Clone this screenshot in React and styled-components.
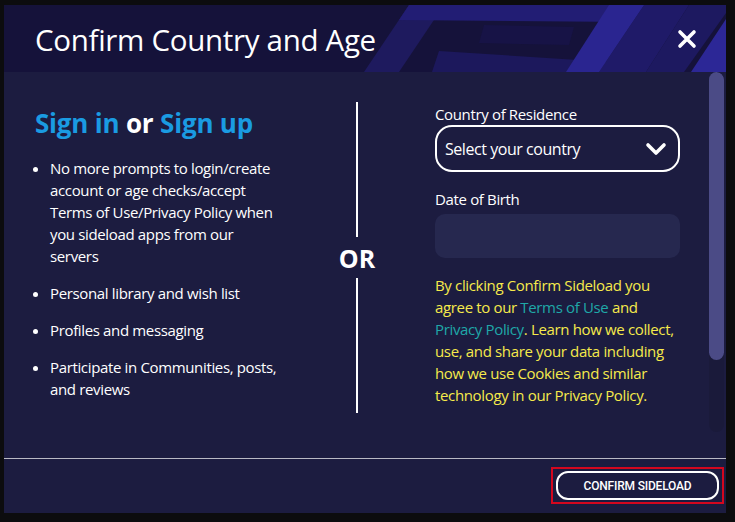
import React from 'react';
import styled, { createGlobalStyle } from 'styled-components';

const GlobalStyle = createGlobalStyle`
  html, body {
    margin: 0;
    padding: 0;
    background: #0c0c0e;
  }
  body {
    font-family: 'Open Sans', 'Noto Sans', sans-serif;
    color: #fff;
  }
`;

const bullets = [
    'No more prompts to login/create account or age checks/accept Terms of Use/Privacy Policy when you sideload apps from our servers',
    'Personal library and wish list',
    'Profiles and messaging',
    'Participate in Communities, posts, and reviews',
];

// purple maze artwork behind the header, right side
const HeaderArt = () => (
    <ArtSvg viewBox="0 0 382 67" preserveAspectRatio="none">
        <polygon points="20,67 55,67 100,0 65,0" fill="#1e1a5e" />
        <polygon points="65,0 300,0 288,17 55,15" fill="#221d74" />
        <polygon points="95,46 265,57 259,67 88,67" fill="#1c185c" />
        <polygon points="140,20 230,22 225,40 135,38" fill="#171346" />
        <polygon points="300,0 345,0 302,67 255,67" fill="#1f1a68" />
        <polygon points="265,0 300,0 255,67 222,67" fill="#2a2590" />
        <polygon points="345,0 382,0 382,8 340,67 302,67" fill="#1d1960" />
        <polygon points="347,67 382,67 382,14" fill="#2c2796" />
    </ArtSvg>
);

const Close = () => (
    <CloseButton aria-label="Close">
        <svg width="20" height="20" viewBox="0 0 20 20">
            <path d="M3 3 L17 17 M17 3 L3 17" stroke="#fff" strokeWidth="3.6" strokeLinecap="round" />
        </svg>
    </CloseButton>
);

const App = () => {
    return(<>
        <GlobalStyle />
        <Page>
            <Modal>
                <Header>
                    <HeaderArt />
                    <Title>Confirm Country and Age</Title>
                    <Close />
                </Header>
                <Body>
                    <Content>
                        <Left>
                            <SignHeading>
                                <Blue>Sign in</Blue> or <Blue>Sign up</Blue>
                            </SignHeading>
                            <List>
                                {bullets.map((b) => <Item key={b}>{b}</Item>)}
                            </List>
                        </Left>
                        <Divider>
                            <VLine />
                            <Or>OR</Or>
                            <VLine />
                        </Divider>
                        <Right>
                            <Label $mb={1}>Country of Residence</Label>
                            <Select>
                                <span>Select your country</span>
                                <svg width="22" height="14" viewBox="0 0 22 14">
                                    <path d="M3 3 L11 11 L19 3" stroke="#fff" strokeWidth="3.6" fill="none" strokeLinecap="round" strokeLinejoin="round" />
                                </svg>
                            </Select>
                            <Label $top={17} $mb={5}>Date of Birth</Label>
                            <DateBox />
                            <Legal>
                                By clicking Confirm Sideload you agree to our <Link>Terms of Use</Link> and <Link>Privacy Policy</Link>. Learn how we collect, use, and share your data including how we use Cookies and similar technology in our Privacy Policy.
                            </Legal>
                        </Right>
                    </Content>
                    <Scrollbar>
                        <Thumb />
                    </Scrollbar>
                </Body>
                <Footer>
                    <Highlight>
                        <ConfirmButton>Confirm Sideload</ConfirmButton>
                    </Highlight>
                </Footer>
            </Modal>
        </Page>
    </>)
}

const Page = styled.div`
    width: 735px;
    height: 522px;
    padding: 5px 0 0 4px;
    box-sizing: border-box;
    overflow: hidden;
    background: #0c0c0e;
`

const Modal = styled.div`
    width: 722px;
    height: 508px;
    display: flex;
    flex-direction: column;
    background: #1c1c40;
`

const Header = styled.div`
    position: relative;
    height: 67px;
    flex: 0 0 67px;
    display: flex;
    align-items: center;
    justify-content: space-between;
    padding: 0 29px 0 31px;
    background: #15123a;
    overflow: hidden;
`

const ArtSvg = styled.svg`
    position: absolute;
    right: 0;
    top: 0;
    width: 382px;
    height: 67px;
`

const Title = styled.h1`
    position: relative;
    margin: 2px 0 0;
    font-family: 'Open Sans', sans-serif;
    font-weight: 400;
    font-size: 29.5px;
    letter-spacing: -0.3px;
    color: #fff;
`

const CloseButton = styled.button`
    position: relative;
    background: transparent;
    border: none;
    padding: 0;
    width: 20px;
    height: 20px;
    display: flex;
`

const Body = styled.div`
    flex: 0 0 386px;
    display: flex;
    border-bottom: 1px solid #b9b9c4;
`

const Content = styled.div`
    flex: 1;
    display: flex;
    padding-top: 30px;
    font-size: 15px;
    letter-spacing: -0.35px;
`

const Left = styled.div`
    width: 245px;
    padding-left: 31px;
`

const SignHeading = styled.h2`
    margin: 3px 0 16px;
    font-size: 26px;
    font-weight: 700;
    color: #fff;
    letter-spacing: -0.2px;
`

const Blue = styled.span`
    color: #1a9be2;
`

const List = styled.ul`
    margin: 0;
    padding-left: 15px;
    line-height: 22px;
`

const Item = styled.li`
    margin-bottom: 15px;
`

const Divider = styled.div`
    width: 94px;
    margin-left: 30px;
    display: flex;
    flex-direction: column;
    align-items: center;
    height: 311px;
`

const VLine = styled.div`
    width: 2px;
    height: 135px;
    background: #fff;
`

const Or = styled.div`
    flex: 1;
    display: flex;
    align-items: center;
    font-size: 25px;
    font-weight: 700;
    letter-spacing: 0;
`

const Right = styled.div`
    width: 245px;
    margin-left: 31px;
    padding-top: 2px;
`

const Label = styled.div`
    margin-top: ${(p) => p.$top || 0}px;
    margin-bottom: ${(p) => p.$mb}px;
    line-height: 20px;
`

const Select = styled.div`
    height: 47px;
    box-sizing: border-box;
    border: 2px solid #fff;
    border-radius: 17px;
    display: flex;
    align-items: center;
    justify-content: space-between;
    padding: 0 11px 0 8px;
    font-size: 16px;
    letter-spacing: -0.45px;
`

const DateBox = styled.div`
    height: 44px;
    border-radius: 10px;
    background: #26284f;
`

const Legal = styled.p`
    margin: 16px 0 0;
    line-height: 22px;
    color: #f6ea4b;
`

const Link = styled.span`
    color: #1fa8a8;
`

const Scrollbar = styled.div`
    width: 19px;
    display: flex;
    justify-content: center;
`

const Track = styled.div`
    width: 15px;
    height: 360px;
    border-radius: 8px;
    background: #1a1a3a;
    overflow: hidden;
`

const ThumbBar = styled.div`
    height: 288px;
    border-radius: 0 8px 8px 8px;
    background: #4b4b86;
`

const Thumb = () => (
    <Track>
        <ThumbBar />
    </Track>
);

const Footer = styled.div`
    flex: 1;
    display: flex;
    justify-content: flex-end;
    align-items: flex-start;
    padding: 8px 2px 0 0;
`

const Highlight = styled.div`
    border: 2px solid #d4071e;
    padding: 2px 3px;
`

const ConfirmButton = styled.button`
    width: 163px;
    height: 29px;
    border: 2px solid #fff;
    border-radius: 12px;
    background: transparent;
    color: #fff;
    font-family: Roboto, sans-serif;
    font-weight: 500;
    font-size: 12px;
    letter-spacing: -0.2px;
    text-transform: uppercase;
`

export default App;
